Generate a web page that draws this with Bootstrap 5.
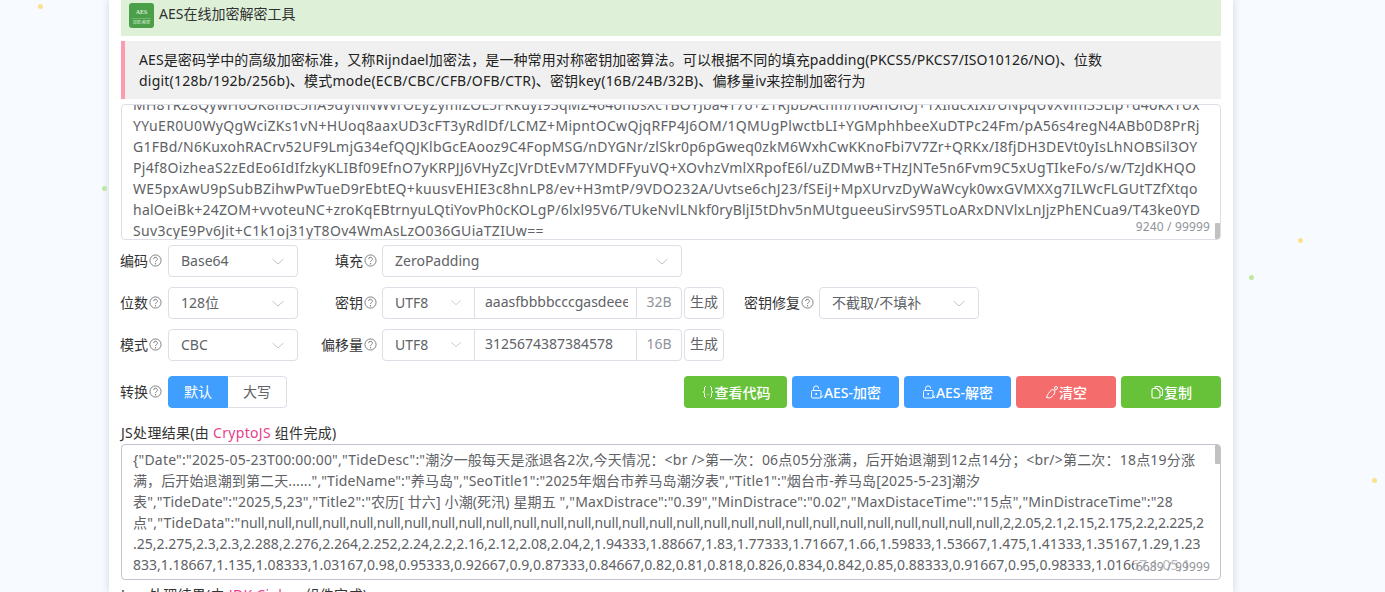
<!doctype html>
<html lang="zh-CN">
<head>
<meta charset="utf-8">
<title>AES在线加密解密工具</title>
<link href="https://cdn.jsdelivr.net/npm/bootstrap@5.3.0/dist/css/bootstrap.min.css" rel="stylesheet">
<style>
html,body{height:592px;overflow:hidden}
body{background:#f7faff;font-family:"Noto Sans","Noto Sans CJK SC",sans-serif;font-size:14px;line-height:21px;color:#303133;position:relative}
.dot{position:absolute;border-radius:50%;width:5px;height:5px}
.dot-y{background:#fde08f}
.dot-g{background:#bfe8a0}
.sheet{width:1124px;height:592px;margin-left:109px;background:#fff;padding:0 12px;box-shadow:0 0 8px rgba(60,70,100,.2);overflow:hidden}
.head-bar{height:36px;background:#dff0d8;padding:3px 8px;gap:5px;margin-bottom:5px}
.logo{width:25px;height:25px;display:block}
.note{height:58px;background:#f0f0f0;border-left:4px solid #fb9cb0;padding:8px 14px;margin-bottom:5px;color:#222}
.note-a{letter-spacing:.11px}
.note-b{letter-spacing:.22px}
.area{position:relative;border:1px solid #dcdfe6;border-radius:4px;overflow:hidden;color:#606266;background:#fff;padding:0 11px}
.area-one{height:136px;letter-spacing:.32px}
.area-two{height:136px;border-color:#c0c4cc;padding-top:4px}
.area-line{white-space:nowrap;height:21px}
.shift{margin-top:-11px;letter-spacing:.22px}
.sp-b3{letter-spacing:.27px}
.sp-b6{letter-spacing:.25px}
.sp-l1{letter-spacing:.2px}
.sp-l2{letter-spacing:.12px}
.sp-l3{letter-spacing:.13px}
.sp-wide{letter-spacing:.3px}
.sp-tight{letter-spacing:-.21px}
.sp-tail{letter-spacing:-.25px}
.counter{position:absolute;right:10px;bottom:3px;font-size:12px;line-height:18px;color:#909399;background:rgba(255,255,255,.55);padding-left:2px;letter-spacing:.15px}
.thumb{position:absolute;right:0;width:5px;background:#c1c1c1;border-radius:1px}
.thumb-low{bottom:0;height:16px}
.thumb-high{top:0;height:19px}
.form-row{height:32px;margin-top:10px}
.form-row.first{margin-top:5px}
.lab{display:flex;align-items:center;justify-content:flex-end;gap:1px;color:#333;white-space:nowrap;padding-bottom:2px}
.lab-a{width:41px;margin-right:6px}
.lab-b{width:76px;margin-left:3px;margin-right:5px}
.lab-c{width:69px;margin-left:21px;margin-right:5px}
.tip{width:13px;height:13px;flex:none}
.sel{position:relative;height:32px;border:1px solid #dcdfe6;border-radius:4px;color:#606266;padding:0 12px 2px;display:flex;align-items:center;background:#fff;white-space:nowrap}
.sel svg{position:absolute;right:12px;top:11px;width:14px;height:9px}
.w130{width:130px}.w300{width:300px}.w160{width:160px}
.grp{width:300px;height:32px;border:1px solid #dcdfe6;border-radius:4px;color:#606266;overflow:hidden}
.grp-sel{width:92px;flex:none;position:relative;padding:0 0 2px 12px;border-right:1px solid #dcdfe6;display:flex;align-items:center}
.grp-sel svg{position:absolute;right:12px;top:10px;width:12px;height:9px}
.grp-in{width:153px;flex:none;margin-right:8px;padding-left:10px;overflow:hidden;white-space:nowrap;line-height:28px}
.grp-suf{width:45px;flex:none;border-left:1px solid #dcdfe6;color:#909399;text-align:center;line-height:28px}
.gen{width:40px;height:32px;margin-left:2px;border:1px solid #dcdfe6;border-radius:4px;color:#606266;text-align:center;line-height:28px;white-space:nowrap;background:#fff;overflow:hidden}
.conv{height:32px;margin-top:15px}
.seg{height:32px;line-height:30px;text-align:center;border:1px solid #dcdfe6;color:#606266;background:#fff}
.seg-on{width:60px;background:#409eff;border-color:#409eff;color:#fff;border-radius:4px 0 0 4px}
.seg-off{width:59px;border-left:0;border-radius:0 4px 4px 0}
.act-row{gap:5px}
.act{height:32px;border-radius:4px;color:#fff;display:flex;align-items:center;justify-content:center;white-space:nowrap;font-weight:500}
.act svg{width:14px;height:14px;flex:none}
.act-g{background:#67c23a}.act-b{background:#409eff}.act-r{background:#f56c6c}
.w103{width:103px}.w107{width:107px}.w100{width:100px}
.res-title{margin-top:14px;margin-bottom:1px;height:21px;color:#333;letter-spacing:.3px}
.res-title em{font-style:normal;color:#e83e8c}
.res-next{margin-top:0;padding-top:4px}
</style>
</head>
<body>
<span class="dot dot-y" style="left:38px;top:4px"></span>
<span class="dot dot-g" style="left:102px;top:186px"></span>
<span class="dot dot-g" style="left:1249px;top:275px"></span>
<span class="dot dot-y" style="left:1298px;top:238px"></span>
<span class="dot dot-y" style="left:1372px;top:478px"></span>
<main class="sheet">
  <div class="head-bar d-flex align-items-start">
    <svg class="logo" viewBox="0 0 25 25"><rect width="25" height="25" rx="3" fill="#4a9f48"/><text x="12.500" y="11" text-anchor="middle" font-size="6" font-family="Liberation Serif,serif" font-weight="700" fill="#d8ecd6">AES</text><rect x="3" y="15" width="19" height=".6" fill="#8cc48a"/><text x="12.500" y="20.500" text-anchor="middle" font-size="4" fill="#d8ecd6">加密/解密</text></svg>
    <span>AES在线加密解密工具</span>
  </div>
  <div class="note"><span class="note-a">AES是密码学中的高级加密标准，又称Rijndael加密法，是一种常用对称密钥加密算法。可以根据不同的填充padding(PKCS5/PKCS7/ISO10126/NO)、位数</span><br><span class="note-b">digit(128b/192b/256b)、模式mode(ECB/CBC/CFB/OFB/CTR)、密钥key(16B/24B/32B)、偏移量iv来控制加密行为</span></div>
  <div class="area area-one">
    <div class="area-line shift">MH8TRZ8QywH6OK8nBc5nA9dyNiNWvrOEyZymiZOL5FKkuyI93qMZ464onbsXc1BOYJba4176+Z1RjbDAchm/n6AnOlOj+1xIlucxIxI/UNpqUvXvim33Lip+d4okXTUx</div>
    <div class="area-line">YYuER0U0WyQgWciZKs1vN+HUoq8aaxUD3cFT3yRdlDf/LCMZ+MipntOCwQjqRFP4J6OM/1QMUgPlwctbLI+YGMphhbeeXuDTPc24Fm/pA56s4regN4ABb0D8PrRj</div>
    <div class="area-line sp-b3">G1FBd/N6KuxohRACrv52UF9LmjG34efQQJKlbGcEAooz9C4FopMSG/nDYGNr/zlSkr0p6pGweq0zkM6WxhCwKKnoFbi7V7Zr+QRKx/I8fjDH3DEVt0yIsLhNOBSil3OY</div>
    <div class="area-line">Pj4f8OizheaS2zEdEo6IdIfzkyKLIBf09EfnO7yKRPJJ6VHyZcJVrDtEvM7YMDFFyuVQ+XOvhzVmlXRpofE6l/uZDMwB+THzJNTe5n6Fvm9C5xUgTIkeFo/s/w/TzJdKHQO</div>
    <div class="area-line">WE5pxAwU9pSubBZihwPwTueD9rEbtEQ+kuusvEHIE3c8hnLP8/ev+H3mtP/9VDO232A/Uvtse6chJ23/fSEiJ+MpXUrvzDyWaWcyk0wxGVMXXg7ILWcFLGUtTZfXtqo</div>
    <div class="area-line sp-b6">halOeiBk+24ZOM+vvoteuNC+zroKqEBtrnyuLQtiYovPh0cKOLgP/6lxl95V6/TUkeNvlLNkf0ryBljI5tDhv5nMUtgueeuSirvS95TLoARxDNVlxLnJjzPhENCua9/T43ke0YD</div>
    <div class="area-line">Suv3cyE9Pv6Jit+C1k1oj31yT8Ov4WmAsLzO036GUiaTZIUw==</div>
    <span class="counter">9240 / 99999</span><span class="thumb thumb-low"></span>
  </div>
  <div class="form-row first d-flex">
    <label class="lab lab-a">编码<svg class="tip" viewBox="0 0 14 14"><use href="#q"/></svg></label>
    <div class="sel w130">Base64<svg viewBox="0 0 14 9"><use href="#chev"/></svg></div>
    <label class="lab lab-b">填充<svg class="tip" viewBox="0 0 14 14"><use href="#q"/></svg></label>
    <div class="sel w300">ZeroPadding<svg viewBox="0 0 14 9"><use href="#chev"/></svg></div>
  </div>
  <div class="form-row d-flex">
    <label class="lab lab-a">位数<svg class="tip" viewBox="0 0 14 14"><use href="#q"/></svg></label>
    <div class="sel w130">128位<svg viewBox="0 0 14 9"><use href="#chev"/></svg></div>
    <label class="lab lab-b">密钥<svg class="tip" viewBox="0 0 14 14"><use href="#q"/></svg></label>
    <div class="grp d-flex">
      <div class="grp-sel">UTF8<svg viewBox="0 0 14 9"><use href="#chev"/></svg></div>
      <div class="grp-in">aaasfbbbbcccgasdeeefffgg</div>
      <div class="grp-suf">32B</div>
    </div>
    <div class="gen">生成</div>
    <label class="lab lab-c">密钥修复<svg class="tip" viewBox="0 0 14 14"><use href="#q"/></svg></label>
    <div class="sel w160">不截取/不填补<svg viewBox="0 0 14 9"><use href="#chev"/></svg></div>
  </div>
  <div class="form-row d-flex">
    <label class="lab lab-a">模式<svg class="tip" viewBox="0 0 14 14"><use href="#q"/></svg></label>
    <div class="sel w130">CBC<svg viewBox="0 0 14 9"><use href="#chev"/></svg></div>
    <label class="lab lab-b">偏移量<svg class="tip" viewBox="0 0 14 14"><use href="#q"/></svg></label>
    <div class="grp d-flex">
      <div class="grp-sel">UTF8<svg viewBox="0 0 14 9"><use href="#chev"/></svg></div>
      <div class="grp-in">3125674387384578</div>
      <div class="grp-suf">16B</div>
    </div>
    <div class="gen">生成</div>
  </div>
  <div class="conv d-flex justify-content-between">
    <div class="d-flex">
      <label class="lab lab-a">转换<svg class="tip" viewBox="0 0 14 14"><use href="#q"/></svg></label>
      <div class="seg seg-on">默认</div>
      <div class="seg seg-off">大写</div>
    </div>
    <div class="d-flex act-row">
      <div class="act act-g w103"><svg viewBox="0 0 14 14" fill="none" stroke="#fff" stroke-width="1"><path d="M5 1.500C3.500 1.500 3.500 2.500 3.500 4V5.500C3.500 6.500 3 7 2 7 3 7 3.500 7.500 3.500 8.500V10C3.500 11.500 3.500 12.500 5 12.500M9 1.500C10.500 1.500 10.500 2.500 10.500 4V5.500C10.500 6.500 11 7 12 7 11 7 10.500 7.500 10.500 8.500V10C10.500 11.500 10.500 12.500 9 12.500"/><path d="M5.800 9.500h.6M7.600 9.500h.6" stroke-width=".8"/></svg>查看代码</div>
      <div class="act act-b w107"><svg viewBox="0 0 14 14" fill="none" stroke="#fff" stroke-width="1"><rect x="1.500" y="5.500" width="9.500" height="7.500" rx="1"/><path d="M3.500 5.500V3.500a2.600 2.600 0 0 1 5.200 0"/><circle cx="6.200" cy="9" r=".9" fill="#fff" stroke="none"/><path d="M10.500 11.500l1 1 1.500-2"/></svg>AES-加密</div>
      <div class="act act-b w107"><svg viewBox="0 0 14 14" fill="none" stroke="#fff" stroke-width="1"><rect x="1.500" y="5.500" width="9.500" height="7.500" rx="1"/><path d="M3.500 5.500V3.500a2.600 2.600 0 0 1 5.200 0"/><circle cx="6.200" cy="9" r=".9" fill="#fff" stroke="none"/><path d="M10.500 10.500l2.500 2.500M13 10.500l-2.500 2.500"/></svg>AES-解密</div>
      <div class="act act-r w100"><svg viewBox="0 0 14 14" fill="none" stroke="#fff" stroke-width="1"><path d="M1.500 12.500C2.500 9.500 4 7 7 4.500l3 1C10 9 8 11.500 4.500 13z"/><circle cx="11" cy="3" r="1.500"/></svg>清空</div>
      <div class="act act-g w100"><svg viewBox="0 0 14 14" fill="none" stroke="#fff" stroke-width="1.100"><path d="M5 3.500V2.500a1 1 0 0 1 1-1h3.500l3 3v5a1 1 0 0 1-1 1h-1"/><path d="M2 5a1.500 1.500 0 0 1 1.500-1.500H7l3 3v5a1.500 1.500 0 0 1-1.500 1.500h-5A1.500 1.500 0 0 1 2 11.500z"/></svg>复制</div>
    </div>
  </div>
  <div class="res-title">JS处理结果(由 <em>CryptoJS</em> 组件完成)</div>
  <div class="area area-two">
    <div class="area-line sp-l1">{"Date":"2025-05-23T00:00:00","TideDesc":"潮汐一般每天是涨退各2次,今天情况：&lt;br /&gt;第一次：06点05分涨满，后开始退潮到12点14分；&lt;br/&gt;第二次：18点19分涨</div>
    <div class="area-line sp-l2">满，后开始退潮到第二天......","TideName":"养马岛","SeoTitle1":"2025年烟台市养马岛潮汐表","Title1":"烟台市-养马岛[2025-5-23]潮汐</div>
    <div class="area-line sp-l3">表","TideDate":"2025,5,23","Title2":"农历[ 廿六] 小潮(死汛) 星期五 ","MaxDistrace":"0.39","MinDistrace":"0.02","MaxDistaceTime":"15点","MinDistraceTime":"28</div>
    <div class="area-line"><span class="sp-wide">点","TideData":"</span><span class="sp-tight">null,null,null,null,null,null,null,null,null,null,null,null,null,null,null,null,null,null,null,null,null,null,null,null,null,null,null,null,</span><span class="sp-tail">2,2.05,2.1,2.15,2.175,2.2,2.225,2</span></div>
    <div class="area-line">.25,2.275,2.3,2.3,2.288,2.276,2.264,2.252,2.24,2.2,2.16,2.12,2.08,2.04,2,1.94333,1.88667,1.83,1.77333,1.71667,1.66,1.59833,1.53667,1.475,1.41333,1.35167,1.29,1.23</div>
    <div class="area-line">833,1.18667,1.135,1.08333,1.03167,0.98,0.95333,0.92667,0.9,0.87333,0.84667,0.82,0.81,0.818,0.826,0.834,0.842,0.85,0.88333,0.91667,0.95,0.98333,1.01667,1.05,1</div>
    <div class="area-line">.08333,1.11667,1.15,1.18333,1.21667,1.25,1.28333,1.31667,1.35,1.38333,1.41667,1.45,1.48333,1.51667,1.55,1.58333,1.61667,1.65,1.68333,1.71667,1.75,1.78333</div>
    <span class="counter">6689 / 99999</span><span class="thumb thumb-high"></span>
  </div>
  <div class="res-title res-next">Java处理结果(由 <em>JDK Cipher</em> 组件完成)</div>
</main>
<svg width="0" height="0" class="position-absolute">
  <symbol id="q" viewBox="0 0 14 14"><circle cx="7" cy="7" r="6" fill="none" stroke="#777" stroke-width="1"/><path d="M5 5.500a2 2 0 1 1 3 1.700c-.7.4-1 .8-1 1.500" fill="none" stroke="#777" stroke-width="1"/><circle cx="7" cy="10.500" r=".7" fill="#777"/></symbol>
  <symbol id="chev" viewBox="0 0 14 9"><path d="M1.500 2 7 7l5.500-5" fill="none" stroke="#c0c4cc" stroke-width="1"/></symbol>
</svg>
<script src="https://cdn.jsdelivr.net/npm/bootstrap@5.3.0/dist/js/bootstrap.bundle.min.js"></script>
</body>
</html>
